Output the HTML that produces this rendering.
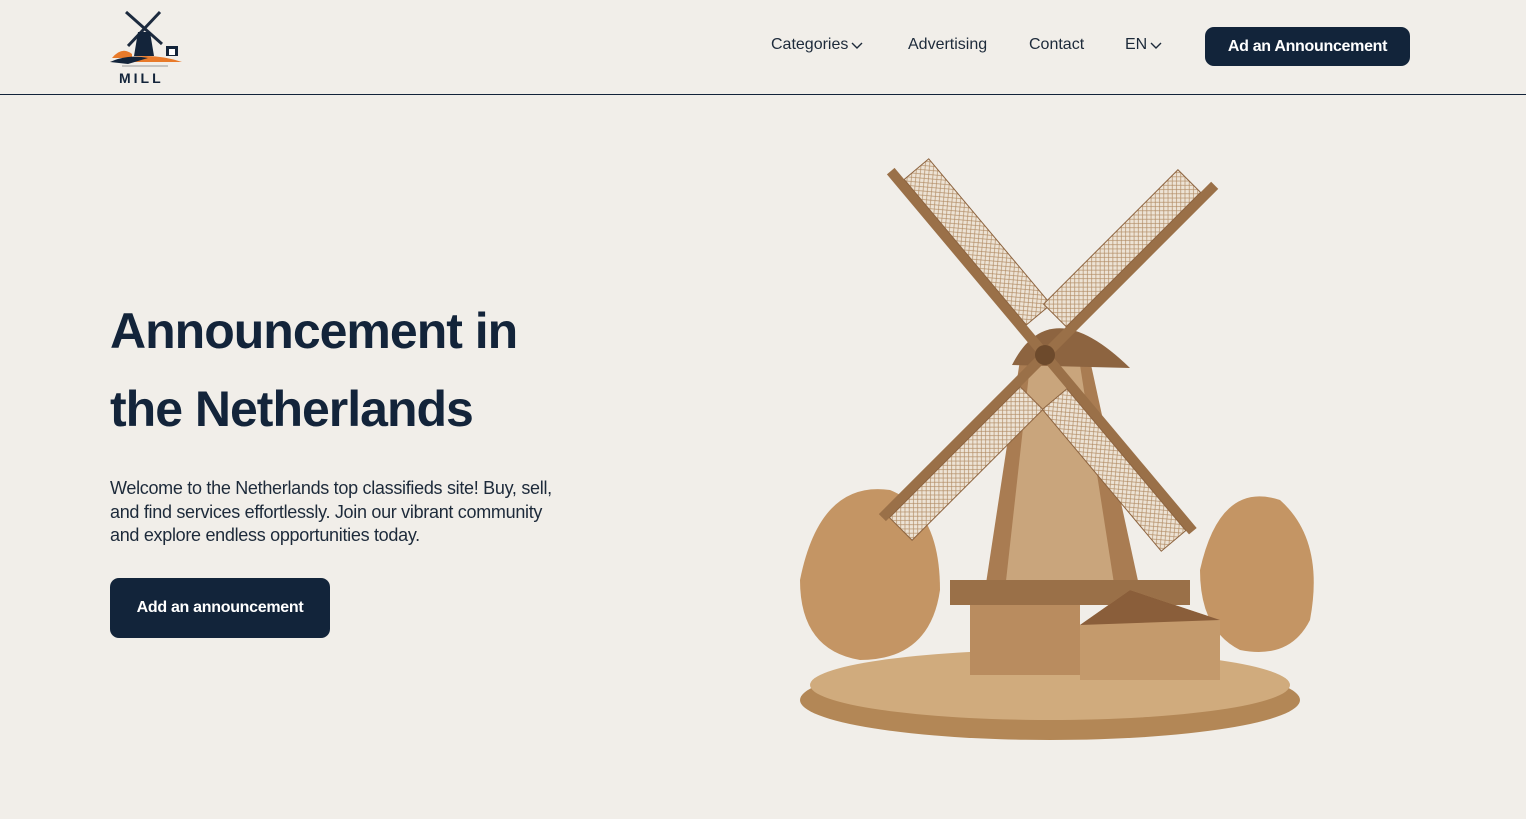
<!DOCTYPE html>
<html><head><meta charset="utf-8"><style>
*{margin:0;padding:0;box-sizing:border-box}
body{width:1526px;height:819px;background:#f1eee9;font-family:"Liberation Sans",Arial,sans-serif;color:#12233a;position:relative;overflow:hidden}
header{position:absolute;left:0;top:0;width:1526px;height:95px;border-bottom:1px solid #12233a}
.nav{position:absolute;top:36px;font-size:16px;color:#1d2a3a}
.nav svg{vertical-align:middle;margin-left:2px}
.btn{position:absolute;background:#12243a;color:#fff;font-weight:bold;border-radius:9px;display:flex;align-items:center;justify-content:center;letter-spacing:-0.3px}
h1{position:absolute;left:110px;top:292px;font-size:50px;line-height:78px;font-weight:bold;letter-spacing:-1px;color:#13243a}
p{position:absolute;left:110px;top:477px;width:462px;font-size:18px;line-height:23.5px;color:#1d2a3a;letter-spacing:-0.3px}
</style></head><body>
<header>
<svg style="position:absolute;left:108px;top:6px" width="76" height="82" viewBox="0 0 76 82">
<g stroke="#1c2a3e" stroke-width="3"><line x1="18" y1="6" x2="54" y2="38"/><line x1="52" y1="6" x2="20" y2="40"/></g>
<polygon points="30,26 42,26 46,50 26,50" fill="#13243a"/>
<rect x="58" y="40" width="12" height="10" fill="#13243a"/><rect x="61" y="43" width="6" height="6" fill="#fff"/>
<path d="M4 52 Q14 40 24 48 L24 52Z" fill="#e87a2a"/>
<path d="M2 56 Q38 44 74 56 Z" fill="#e87a2a"/><path d="M2 56 Q20 48 40 52 L20 58Z" fill="#13243a"/>
<line x1="14" y1="60" x2="60" y2="60" stroke="#999" stroke-width="1"/>
<text x="11" y="77" font-family="Liberation Sans" font-weight="bold" font-size="14" letter-spacing="3" fill="#13243a">MILL</text>
</svg>
<div class="nav" style="left:771px">Categories<svg width="14" height="10" viewBox="0 0 14 10"><path d="M2 3l5 5 5-5" fill="none" stroke="#1d2a3a" stroke-width="1.4"/></svg></div>
<div class="nav" style="left:908px">Advertising</div>
<div class="nav" style="left:1029px">Contact</div>
<div class="nav" style="left:1125px">EN<svg width="14" height="10" viewBox="0 0 14 10"><path d="M2 3l5 5 5-5" fill="none" stroke="#1d2a3a" stroke-width="1.4"/></svg></div>
<div class="btn" style="left:1205px;top:27px;width:205px;height:39px;font-size:16px">Ad an Announcement</div>
</header>
<h1>Announcement in<br>the Netherlands</h1>
<p>Welcome to the Netherlands top classifieds site! Buy, sell, and find services effortlessly. Join our vibrant community and explore endless opportunities today.</p>
<div class="btn" style="left:110px;top:578px;width:220px;height:60px;font-size:16px">Add an announcement</div>
<svg style="position:absolute;left:780px;top:140px" width="540" height="610" viewBox="0 0 540 610">
<defs><pattern id="h" width="6" height="6" patternUnits="userSpaceOnUse"><rect width="6" height="6" fill="#ede3d5"/><path d="M0 0L6 6M6 0L0 6" stroke="#b38e67" stroke-width="0.7"/></pattern></defs>
<ellipse cx="270" cy="560" rx="250" ry="40" fill="#b38756"/>
<ellipse cx="270" cy="545" rx="240" ry="35" fill="#d0ab7d"/>
<path d="M20 440 Q40 340 110 350 Q160 370 160 450 Q150 520 80 520 Q20 510 20 440Z" fill="#c49564"/>
<path d="M420 430 Q440 340 500 360 Q545 400 530 480 Q510 520 460 510 Q420 490 420 430Z" fill="#c49564"/>
<polygon points="240,220 310,220 360,450 205,450" fill="#a97c52"/>
<polygon points="250,225 300,225 335,450 225,450" fill="#c9a57c"/>
<path d="M232 225 Q270 150 350 228 Z" fill="#8d6440"/>
<rect x="170" y="440" width="240" height="25" fill="#9a7048"/>
<rect x="190" y="465" width="110" height="70" fill="#b98c5f"/>
<polygon points="300,485 350,450 440,480 440,540 300,540" fill="#c49a6c"/>
<polygon points="300,485 350,450 440,480" fill="#8a5e3a"/>
<g transform="translate(265,215)">
<g transform="rotate(-40)"><rect x="-5" y="-240" width="10" height="470" fill="#9a7048"/><rect x="5" y="-225" width="32" height="190" fill="url(#h)" stroke="#8d6440"/><rect x="-37" y="40" width="32" height="185" fill="url(#h)" stroke="#8d6440"/></g>
<g transform="rotate(45)"><rect x="-5" y="-240" width="10" height="470" fill="#9a7048"/><rect x="-37" y="-225" width="32" height="190" fill="url(#h)" stroke="#8d6440"/><rect x="5" y="40" width="32" height="185" fill="url(#h)" stroke="#8d6440"/></g>
<circle r="10" fill="#6d4a2c"/>
</g>
</svg>
</body></html>
